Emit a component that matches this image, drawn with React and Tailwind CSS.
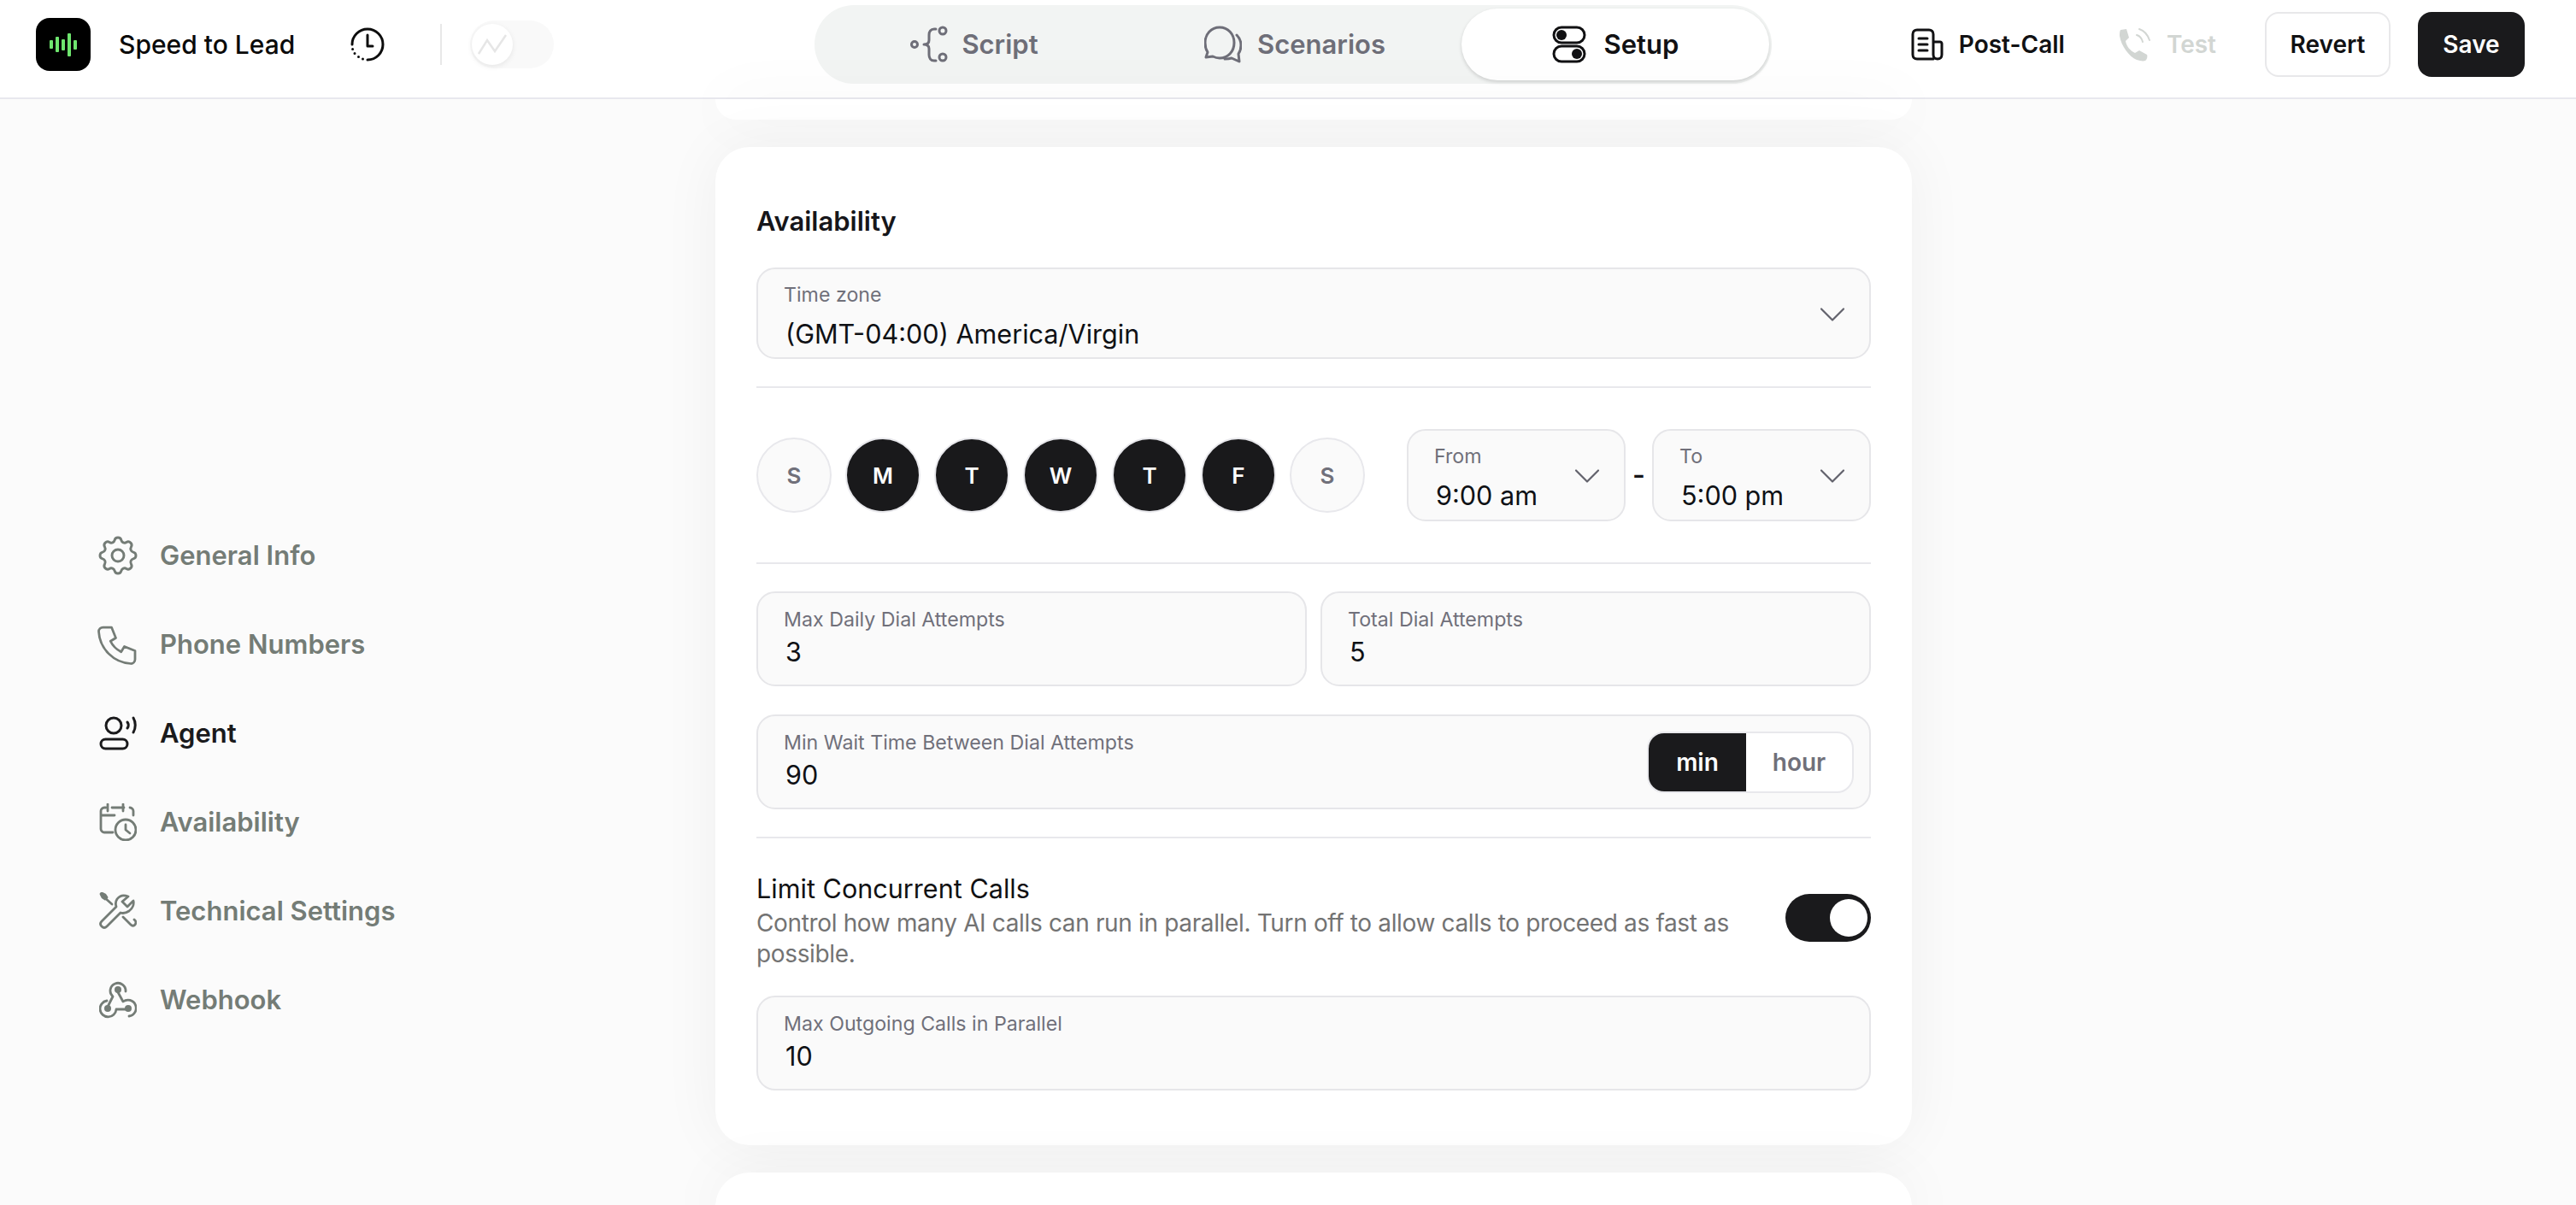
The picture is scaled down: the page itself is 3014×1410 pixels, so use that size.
import { ChevronDown } from 'lucide-react';
import { TbSettings, TbPhone } from 'react-icons/tb';

const sans = 'font-["Inter",sans-serif]';

// --- header icons ---
function LogoMark() {
  return (
    <div className="flex h-[62px] w-[64px] items-center justify-center gap-[3px] rounded-[16px] bg-black">
      {[10, 18, 13, 27, 11].map((h, i) => (
        <span key={i} className="w-[4px] rounded-[1px] bg-[#6ee56e]" style={{ height: h }} />
      ))}
    </div>
  );
}

function HistoryIcon() {
  return (
    <svg viewBox="0 0 40 40" className="h-[40px] w-[40px]" fill="none" stroke="#0d0d0d" strokeWidth="3" strokeLinecap="round" strokeLinejoin="round">
      <path d="M2 20a18 18 0 1 1 18 18" />
      <path d="M20 9v13h6" />
      <path d="M2.600 25.500v.01M5 30.500v.01M9.500 34.500v.01M14.500 37v.01" />
    </svg>
  );
}

function ScriptIcon() {
  return (
    <svg viewBox="0 0 44 44" className="h-[44px] w-[44px]" fill="none" stroke="#6e6e78" strokeWidth="3" strokeLinecap="round" strokeLinejoin="round">
      <circle cx="5" cy="22" r="3.500" />
      <circle cx="38" cy="6" r="4" />
      <circle cx="38" cy="37" r="4" />
      <path d="M30 4h-2c-4 0-6 3-6 7v6c0 3-2 5-6 5 4 0 6 2 6 5v7c0 4 2 7 6 7h2" />
    </svg>
  );
}

function ScenariosIcon() {
  return (
    <svg viewBox="0 0 44 44" className="h-[44px] w-[44px]" fill="none" stroke="#6e6e78" strokeWidth="3" strokeLinecap="round" strokeLinejoin="round">
      <path d="M4 31c-2-3-3-7-3-11C1 10 8 2 18 2s17 8 17 18-7 18-17 18c-3 0-6-1-8-2l-8 1z" />
      <path d="M38 11c3 3 5 7 5 12 0 4-1 7-3 10l1 9-9-4c-3 1-5 1-8 1" />
    </svg>
  );
}

function SetupIcon() {
  return (
    <svg viewBox="0 0 40 44" className="h-[44px] w-[40px]" fill="none" stroke="#111113" strokeWidth="3">
      <rect x="2" y="2" width="36" height="18" rx="9" />
      <rect x="2" y="24" width="36" height="18" rx="9" />
      <circle cx="11" cy="11" r="6" fill="#111113" stroke="none" />
      <circle cx="29" cy="33" r="6" fill="#111113" stroke="none" />
    </svg>
  );
}

function PostCallIcon() {
  return (
    <svg viewBox="0 0 38 38" className="h-[38px] w-[38px]" fill="none" stroke="#111113" strokeWidth="3" strokeLinecap="round" strokeLinejoin="round">
      <path d="M26 36H7c-3 0-5-2-5-5V7c0-3 2-5 5-5h14c3 0 5 2 5 5v24c0 3 2 5 5 5s5-2 5-5V18c0-1-1-2-2-2h-8" />
      <path d="M9 12h10M9 19h10M9 26h10" />
    </svg>
  );
}

function TestIcon() {
  return (
    <svg viewBox="0 0 38 40" className="h-[40px] w-[38px]" fill="none">
      <path d="M2 3l7-1 3 10-4 4c1 6 5 11 11 14l5-3 9 5c1 2 0 6-2 7-3 1-6 0-10-1C12 34 3 22 1 10c0-3 0-5 1-7z" fill="#d2d6d3" />
      <path d="M21 9c4 1 6 4 7 8M24 2c6 2 10 7 12 13" stroke="#d2d6d3" strokeWidth="2" strokeLinecap="round" />
    </svg>
  );
}

// --- sidebar icons ---
function AgentIcon({ color }) {
  return (
    <svg viewBox="0 0 44 40" className="h-[44px] w-[44px]" fill="none" stroke={color} strokeWidth="3" strokeLinecap="round">
      <circle cx="17" cy="11" r="9" />
      <rect x="2" y="27" width="31" height="11" rx="5.500" />
      <path d="M33 7c1.500 2 1.500 5 0 7M40 2c3 5 3 12 0 17" />
    </svg>
  );
}

function CalendarClockIcon({ color }) {
  return (
    <svg viewBox="0 0 44 44" className="h-[44px] w-[44px]" fill="none" stroke={color} strokeWidth="2.800" strokeLinecap="round" strokeLinejoin="round">
      <path d="M16 34H6c-2 0-4-2-4-4V9c0-2 2-4 4-4h2M15 5h14M36 5c2 0 4 2 4 4v5M2 14h16" />
      <path d="M10 1v8M28 1v8" />
      <circle cx="31" cy="31" r="12" />
      <path d="M31 25v6l5 4" />
    </svg>
  );
}

function ToolsIcon({ color }) {
  return (
    <svg viewBox="0 0 44 44" className="h-[44px] w-[44px]" fill="none" stroke={color} strokeWidth="2.800" strokeLinecap="round" strokeLinejoin="round">
      <path d="M40 10l-7 7-6-6 7-6c-5-2-10-1-13 3-2 3-2 6-1 9L3 34c-2 2-2 4 0 6s4 2 6 0l16-16c3 1 7 0 10-2 4-3 6-8 5-12z" />
      <path d="M15 14L6 6" />
      <path d="M3 1l4 2 2 3-2 2-3-2-2-4z" fill={color} />
      <path d="M28 29l9 9c3 3 6 0 6-3 0-1-1-2-2-3" />
    </svg>
  );
}

function WebhookIcon({ color }) {
  return (
    <svg viewBox="0 0 44 44" className="h-[44px] w-[44px]" fill="none" stroke={color} strokeWidth="2.800" strokeLinecap="round" strokeLinejoin="round">
      <path d="M31 12a9 9 0 1 0-15 6l-6 12" />
      <path d="M9 23a9.500 9.500 0 1 0 11 10h14" />
      <path d="M35 41a9.500 9.500 0 1 0-7-17l-6-11" />
      <circle cx="22" cy="10" r="4" fill={color} stroke="none" />
      <circle cx="10" cy="32" r="4" fill={color} stroke="none" />
      <circle cx="34" cy="32" r="4" fill={color} stroke="none" />
    </svg>
  );
}

function NavItem({ icon, label, active }) {
  return (
    <div className="flex h-[48px] items-center gap-[27px]">
      <div className="flex h-[44px] w-[44px] items-center justify-center">{icon}</div>
      <span className={`text-[31px] font-semibold ${active ? 'text-[#1a1a1c]' : 'text-[#747c76]'}`}>{label}</span>
    </div>
  );
}

function Field({ label, value, select, className = '' }) {
  return (
    <div className={`relative rounded-[22px] border-2 border-[#e6e6e9] bg-[#fafafa] px-[30px] ${className}`}>
      <div className={`${select ? 'mt-[14px]' : 'mt-[15px]'} text-[23.2px] leading-[32px] text-[#70707a]`}>{label}</div>
      <div className={`${select ? 'mt-[10px]' : 'mt-[2px]'} pl-[2px] text-[30.6px] leading-[40px] text-[#0f1115]`}>{value}</div>
      {select && (
        <ChevronDown
          className="absolute right-[17px] top-[calc(50%+1px)] h-[52px] w-[52px] -translate-y-1/2 text-[#62626c]"
          strokeWidth={1}
        />
      )}
    </div>
  );
}

const navColor = '#747c76';
const days = [
  ['S', false],
  ['M', true],
  ['T', true],
  ['W', true],
  ['T', true],
  ['F', true],
  ['S', false],
];

export default function App() {
  return (
    <div className={`flex h-[1410px] w-[3014px] flex-col overflow-hidden bg-[#fbfbfb] ${sans}`}>
      {/* --- HEADER --- */}
      <header className="flex h-[116px] shrink-0 items-center border-b-2 border-[#e8e8ee] bg-white pb-[10px]">
        <div className="flex w-[953px] shrink-0 items-center pl-[42px]">
          <LogoMark />
          <span className="ml-[33px] text-[30px] font-medium text-[#0a0a0a]">Speed to Lead</span>
          <div className="ml-[65px]"><HistoryIcon /></div>
          <div className="ml-[65px] h-[48px] w-[2px] bg-[#e8e8e8]" />
          <div className="ml-[33px] flex h-[56px] w-[98px] items-center rounded-full bg-[#f9f9f9] pl-[2px]">
            <div className="flex h-[48px] w-[48px] items-center justify-center rounded-full bg-white shadow-[0_2px_6px_rgba(0,0,0,0.08)]">
              <svg viewBox="0 0 34 24" className="h-[24px] w-[34px]" fill="none" stroke="#e6e6e6" strokeWidth="2.500">
                <path d="M1 23L11 7l9 13L33 1" />
              </svg>
            </div>
          </div>
        </div>

        <nav className="flex h-[92px] w-[1120px] shrink-0 items-center gap-[15px] rounded-full bg-[#f2f4f3] pl-[7px] pr-[3px]">
          <div className="flex h-[84px] w-[360px] items-center justify-center gap-[16px] text-[31px] font-semibold text-[#6e6e78]">
            <ScriptIcon />Script
          </div>
          <div className="flex h-[84px] w-[360px] items-center justify-center gap-[18px] text-[31px] font-semibold text-[#6e6e78]">
            <ScenariosIcon />Scenarios
          </div>
          <div className="flex h-[84px] w-[360px] items-center justify-center gap-[21px] rounded-full bg-white text-[31px] font-semibold text-[#111113] shadow-[0_2px_4px_rgba(0,0,0,0.15)]">
            <SetupIcon />Setup
          </div>
        </nav>

        <div className="flex flex-1 items-center justify-end pr-[60px]">
          <div className="flex items-center gap-[18px] text-[28px] font-semibold text-[#111113]">
            <PostCallIcon />Post-Call
          </div>
          <div className="ml-[63px] flex items-center gap-[18px] text-[28px] font-semibold text-[#d2d6d3]">
            <TestIcon />Test
          </div>
          <div className="ml-[57px] flex h-[76px] w-[147px] items-center justify-center rounded-[16px] border-2 border-[#e8e8ea] bg-white text-[28px] font-semibold text-[#111113]">
            Revert
          </div>
          <div className="ml-[32px] flex h-[76px] w-[125px] items-center justify-center rounded-[16px] bg-[#1a1a1c] text-[28px] font-semibold text-white">
            Save
          </div>
        </div>
      </header>

      <main className="flex min-h-0 flex-1">
        {/* --- SIDEBAR --- */}
        <aside className="flex w-[837px] shrink-0 flex-col gap-[56px] pl-[116px] pt-[510px]">
          <NavItem icon={<TbSettings size={56} strokeWidth={1.25} color={navColor} className="shrink-0" />} label="General Info" />
          <NavItem icon={<TbPhone size={60} strokeWidth={1.1} color={navColor} className="shrink-0" />} label="Phone Numbers" />
          <NavItem icon={<AgentIcon color="#1a1a1c" />} label="Agent" active />
          <NavItem icon={<CalendarClockIcon color={navColor} />} label="Availability" />
          <NavItem icon={<ToolsIcon color={navColor} />} label="Technical Settings" />
          <NavItem icon={<WebhookIcon color={navColor} />} label="Webhook" />
        </aside>

        {/* --- CARDS --- */}
        <div className="flex w-[1400px] shrink-0 flex-col gap-[32px]">
          <div className="h-[24px] shrink-0 rounded-b-[40px] bg-white shadow-[0_0_70px_rgba(0,0,0,0.05)]" />

          <section className="shrink-0 rounded-[40px] bg-white px-[48px] pb-[64px] pt-[63px] shadow-[0_0_70px_rgba(0,0,0,0.05)]">
            <h2 className="text-[31px] font-semibold leading-[48px] text-[#16161a]">Availability</h2>

            <Field className="mt-[30px] h-[107px]" label="Time zone" value="(GMT-04:00) America/Virgin" select />

            <div className="mt-[32px] h-[2px] bg-[#e8e8ec]" />

            <div className="mt-[48px] flex items-center justify-between">
              <div className="flex gap-[16px]">
                {days.map(([d, on], i) => (
                  <div
                    key={i}
                    className={`flex h-[88px] w-[88px] items-center justify-center rounded-full border-2 border-[#e8e8ec] text-[26px] font-semibold ${
                      on ? 'bg-[#19191b] text-white' : 'bg-[#fafafa] text-[#70707a]'
                    }`}
                  >
                    {d}
                  </div>
                ))}
              </div>
              <div className="flex items-center">
                <Field className="h-[108px] w-[256px]" label="From" value="9:00 am" select />
                <span className="w-[31px] text-center text-[32px] font-semibold text-[#16161a]">-</span>
                <Field className="h-[108px] w-[256px]" label="To" value="5:00 pm" select />
              </div>
            </div>

            <div className="mt-[48px] h-[2px] bg-[#e8e8ec]" />

            <div className="mt-[32px] grid grid-cols-2 gap-[16px]">
              <Field className="h-[111px]" label="Max Daily Dial Attempts" value="3" />
              <Field className="h-[111px]" label="Total Dial Attempts" value="5" />
            </div>

            <div className="relative mt-[33px]">
              <Field className="h-[111px]" label="Min Wait Time Between Dial Attempts" value="90" />
              <div className="absolute right-[20px] top-[20px] flex h-[72px] w-[242px] overflow-hidden rounded-[20px] border-2 border-[#e8e8ec] bg-white text-[28px] font-semibold">
                <div className="flex w-[114px] items-center justify-center bg-[#1a1a1c] text-white">min</div>
                <div className="flex flex-1 items-center justify-center text-[#70707a]">hour</div>
              </div>
            </div>

            <div className="mt-[32px] h-[2px] bg-[#e8e8ec]" />

            <div className="mt-[39px] flex items-start justify-between gap-[60px]">
              <div className="flex-1">
                <div className="text-[30.6px] leading-[40px] text-[#111113]">Limit Concurrent Calls</div>
                <p className="mt-[2px] text-[28px] leading-[36px] tracking-[-0.35px] text-[#737373]">
                  Control how many AI calls can run in parallel. Turn off to allow calls to proceed as fast as possible.
                </p>
              </div>
              <div className="mt-[26px] flex h-[56px] w-[100px] shrink-0 items-center justify-end rounded-full bg-[#1a1a1c] pr-[4px]">
                <div className="h-[44px] w-[44px] rounded-full bg-white" />
              </div>
            </div>

            <Field className="mt-[31px] h-[111px]" label="Max Outgoing Calls in Parallel" value="10" />
          </section>

          <div className="h-[60px] shrink-0 rounded-t-[40px] bg-white shadow-[0_0_70px_rgba(0,0,0,0.05)]" />
        </div>
      </main>
    </div>
  );
}
